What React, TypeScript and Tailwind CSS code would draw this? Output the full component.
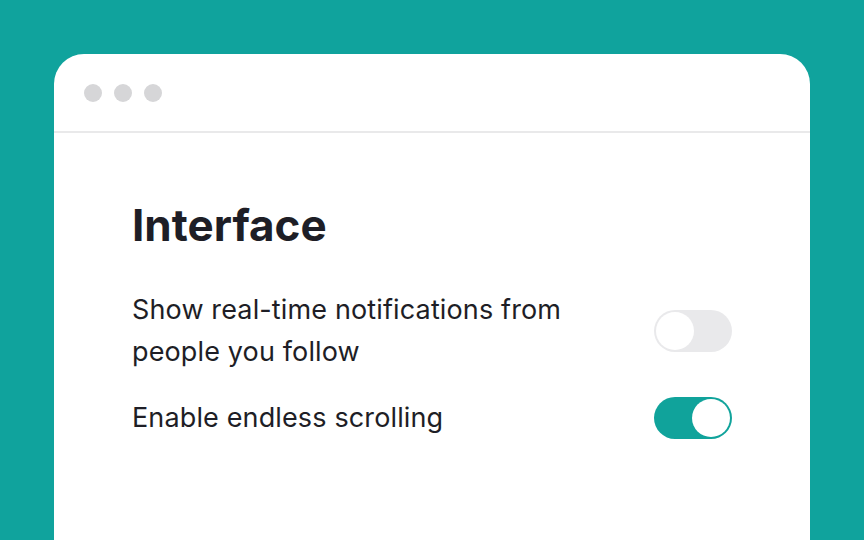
import React, { useState } from "react";

interface ToggleProps {
  on: boolean;
  onChange: () => void;
}

const Toggle: React.FC<ToggleProps> = ({ on, onChange }) => {
  return (
    <button
      type="button"
      onClick={onChange}
      className={
        on
          ? "flex h-[42px] w-[78px] shrink-0 items-center justify-end rounded-full bg-[#10a39b] p-[2px]"
          : "flex h-[42px] w-[78px] shrink-0 items-center justify-start rounded-full bg-[#e9e9eb] p-[2px]"
      }
    >
      <span className="block h-[38px] w-[38px] rounded-full bg-white" />
    </button>
  );
};

const App: React.FC = () => {
  const [realtime, setRealtime] = useState(false);
  const [endless, setEndless] = useState(true);

  return (
    <div
      className="h-[540px] w-[864px] overflow-hidden bg-[#10a39d] px-[54px] pt-[54px]"
      style={{ fontFamily: "Inter, 'Noto Sans', sans-serif" }}
    >
      <div className="h-[520px] rounded-t-[30px] bg-white">
        {/* window bar */}
        <div className="flex h-[79px] items-center gap-3 border-b-2 border-[#e9e9ea] px-[30px]">
          <span className="h-[18px] w-[18px] rounded-full bg-[#d6d6d8]" />
          <span className="h-[18px] w-[18px] rounded-full bg-[#d6d6d8]" />
          <span className="h-[18px] w-[18px] rounded-full bg-[#d6d6d8]" />
        </div>

        <div className="px-[78px] pt-[66px] text-[#1e1e26]">
          <h2 className="text-[44px] font-bold leading-[53px]">Interface</h2>
          <div className="mt-[37px] flex flex-col gap-[24px]">
            <div className="flex items-center justify-between gap-8">
              <p className="w-[450px] text-[27px] leading-[42px] tracking-[0.005em]">
                Show real-time notifications from people you follow
              </p>
              <Toggle on={realtime} onChange={() => setRealtime(!realtime)} />
            </div>
            <div className="flex items-center justify-between gap-8">
              <p className="text-[27px] leading-[42px] tracking-[0.005em]">
                Enable endless scrolling
              </p>
              <Toggle on={endless} onChange={() => setEndless(!endless)} />
            </div>
          </div>
        </div>
      </div>
    </div>
  );
};

export default App;
